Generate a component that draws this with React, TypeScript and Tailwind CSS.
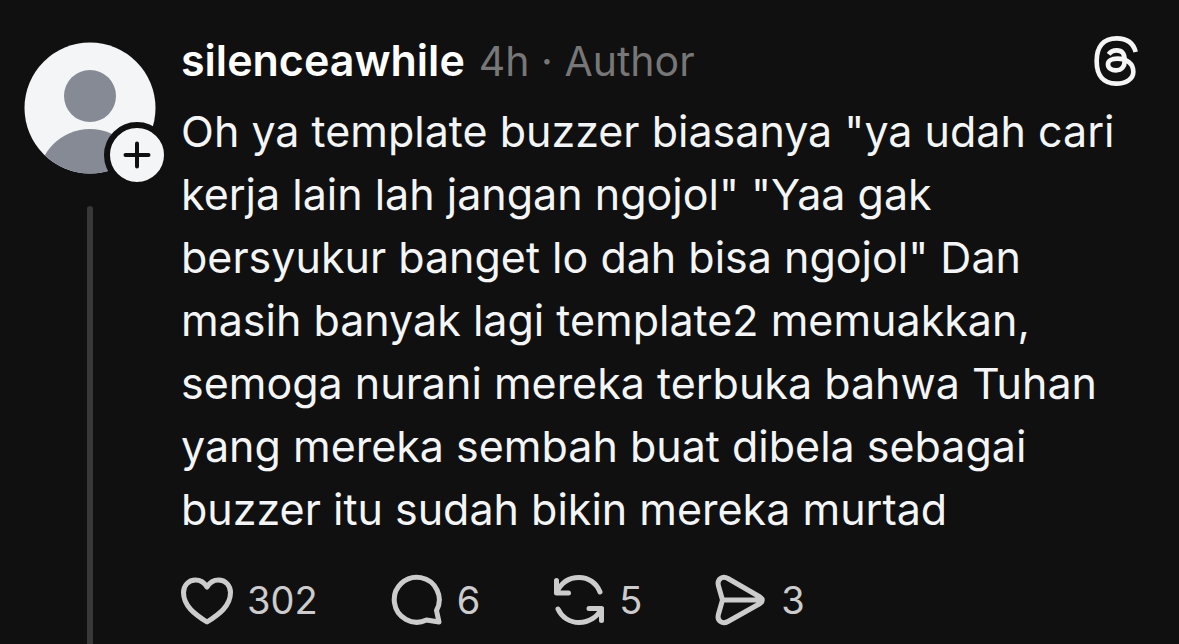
import type { ReactNode } from "react";

const POST_TEXT =
  'Oh ya template buzzer biasanya "ya udah cari kerja lain lah jangan ngojol" "Yaa gak bersyukur banget lo dah bisa ngojol" Dan masih banyak lagi template2 memuakkan, semoga nurani mereka terbuka bahwa Tuhan yang mereka sembah buat dibela sebagai buzzer itu sudah bikin mereka murtad';

function ThreadsLogo() {
  return (
    <svg viewBox="42 33 132 150" className="h-[50px] w-11 shrink-0" fill="none" stroke="#f5f5f5" strokeWidth="14" aria-hidden="true">
      <path d="M167 81C160 53 140 40 110 40C70 40 50 65 50 108C50 152 70 176 108 176C139 176 160 161 160 140C160 115 140 101 112 101C94 101 84 108 84 118C84 130 95 136 108 136C126 136 134 124 134 107C134 86 127 76 110 76C99 76 92 79 86 88" />
    </svg>
  );
}

function Avatar() {
  return (
    <div className="relative">
      <svg viewBox="0 0 132 132" className="size-[132px]" role="img" aria-label="Profile picture">
        <clipPath id="avatar">
          <circle cx="66" cy="66" r="65.5" />
        </clipPath>
        <g clipPath="url(#avatar)">
          <rect width="132" height="132" fill="#f3f5f7" />
          <circle cx="66" cy="54" r="26" fill="#858a94" />
          <circle cx="66" cy="139" r="52" fill="#858a94" />
        </g>
      </svg>
      <button
        type="button"
        aria-label="Follow"
        className="absolute -right-3.5 -bottom-3.5 flex size-[66px] items-center justify-center rounded-full border-6 border-[#101010] bg-[#f3f5f7]"
      >
        <svg viewBox="0 0 28 28" className="size-7" stroke="#101010" strokeWidth="4" strokeLinecap="round">
          <path d="M14 2.500v23M2.500 14h23" />
        </svg>
      </button>
    </div>
  );
}

function Action({ label, count, children }: { label: string; count: number; children: ReactNode }) {
  return (
    <button type="button" aria-label={`${label} ${count}`} className="flex items-center gap-[14px]">
      <svg
        viewBox="0 0 52 52"
        className="size-[52px]"
        fill="none"
        stroke="currentColor"
        strokeWidth="5"
        strokeLinecap="round"
        strokeLinejoin="round"
      >
        {children}
      </svg>
      <span className="text-[38px] leading-[52px]">{count}</span>
    </button>
  );
}

export default function App() {
  return (
    <article className="flex min-h-screen gap-[25px] bg-[#101010] pl-6 pr-[41px] font-[Inter,sans-serif] text-[#f3f5f7]">
      <div className="flex flex-col items-center pt-[42px]">
        <Avatar />
        <div className="mt-8 w-[6px] grow rounded-t-full bg-[#383838]" />
      </div>

      <div className="min-w-0 flex-1 pt-[29px] pb-[18px]">
        <header className="flex items-center justify-between">
          <div className="flex items-baseline gap-[14px] leading-[63px]">
            <a href="#profile" className="text-[43px] font-semibold text-white">
              silenceawhile
            </a>
            <span className="text-[41px] text-[#777777]">4h · Author</span>
          </div>
          <ThreadsLogo />
        </header>

        <p className="mt-[7px] text-[43px] leading-[63px]">{POST_TEXT}</p>

        <div className="mt-[33px] flex gap-[73px] text-[#cccccc]">
          <Action label="Like" count={302}>
            <path d="M26 13C23 8 19 6 14.500 6C7.500 6 2.500 11.500 2.500 18.500C2.500 32 14 40.500 26 48C38 40.500 49.500 32 49.500 18.500C49.500 11.500 44.500 6 37.500 6C33 6 29 8 26 13Z" />
          </Action>
          <Action label="Reply" count={6}>
            <path d="M45.500 36.500A22.500 22.500 0 1 0 35.500 46L48 48Z" />
          </Action>
          <Action label="Repost" count={5}>
            <path d="M47 18C43.500 9 35.500 3.500 26 3.500C16 3.500 8 9 3.500 18.500M3.500 6.500v12.500h12M5 35C8.500 43 16.500 48.500 26 48.500C36 48.500 44.500 43 48.500 34.500M48.500 46.500V34.500H36" />
          </Action>
          <Action label="Share" count={3}>
            <path d="M7.500 26H46M7.500 26L3.500 12C1.500 5 7.500 1.500 13 4.500L45 23C48 25 48 27.500 45 29.500L13 47.500C7.500 50.500 1.500 47 3.500 40Z" />
          </Action>
        </div>
      </div>
    </article>
  );
}
